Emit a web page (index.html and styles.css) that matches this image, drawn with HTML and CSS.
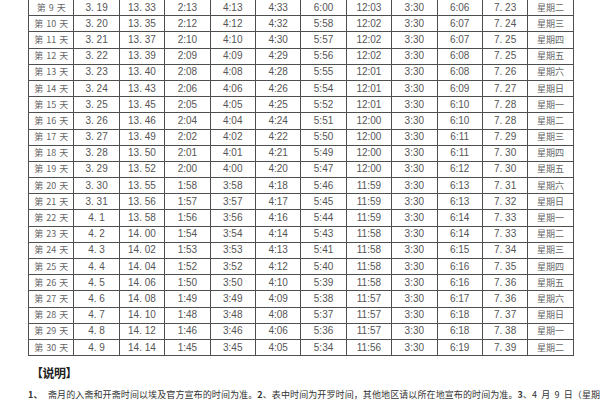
FILE: index.html
```html
<!DOCTYPE html>
<html lang="zh">
<head>
<meta charset="utf-8">
<link rel="stylesheet" href="styles.css">
</head>
<body>
<div class="page">
<table class="tbl">
<colgroup>
<col class="c"><col class="c"><col class="c"><col class="c"><col class="c"><col class="c"><col class="c"><col class="c"><col class="c"><col class="c"><col class="c"><col class="c">
</colgroup>
<tbody>
<tr><td class="d">第 9 天</td><td>3. 19</td><td>13. 33</td><td>2:13</td><td>4:13</td><td>4:33</td><td>6:00</td><td>12:03</td><td>3:30</td><td>6:06</td><td>7. 23</td><td class="w">星期二</td></tr>
<tr><td class="d">第 10 天</td><td>3. 20</td><td>13. 35</td><td>2:12</td><td>4:12</td><td>4:32</td><td>5:58</td><td>12:02</td><td>3:30</td><td>6:07</td><td>7. 24</td><td class="w">星期三</td></tr>
<tr><td class="d">第 11 天</td><td>3. 21</td><td>13. 37</td><td>2:10</td><td>4:10</td><td>4:30</td><td>5:57</td><td>12:02</td><td>3:30</td><td>6:07</td><td>7. 25</td><td class="w">星期四</td></tr>
<tr><td class="d">第 12 天</td><td>3. 22</td><td>13. 39</td><td>2:09</td><td>4:09</td><td>4:29</td><td>5:56</td><td>12:02</td><td>3:30</td><td>6:08</td><td>7. 25</td><td class="w">星期五</td></tr>
<tr><td class="d">第 13 天</td><td>3. 23</td><td>13. 40</td><td>2:08</td><td>4:08</td><td>4:28</td><td>5:55</td><td>12:01</td><td>3:30</td><td>6:08</td><td>7. 26</td><td class="w">星期六</td></tr>
<tr><td class="d">第 14 天</td><td>3. 24</td><td>13. 43</td><td>2:06</td><td>4:06</td><td>4:26</td><td>5:54</td><td>12:01</td><td>3:30</td><td>6:09</td><td>7. 27</td><td class="w">星期日</td></tr>
<tr><td class="d">第 15 天</td><td>3. 25</td><td>13. 45</td><td>2:05</td><td>4:05</td><td>4:25</td><td>5:52</td><td>12:01</td><td>3:30</td><td>6:10</td><td>7. 28</td><td class="w">星期一</td></tr>
<tr><td class="d">第 16 天</td><td>3. 26</td><td>13. 46</td><td>2:04</td><td>4:04</td><td>4:24</td><td>5:51</td><td>12:00</td><td>3:30</td><td>6:10</td><td>7. 28</td><td class="w">星期二</td></tr>
<tr><td class="d">第 17 天</td><td>3. 27</td><td>13. 49</td><td>2:02</td><td>4:02</td><td>4:22</td><td>5:50</td><td>12:00</td><td>3:30</td><td>6:11</td><td>7. 29</td><td class="w">星期三</td></tr>
<tr><td class="d">第 18 天</td><td>3. 28</td><td>13. 50</td><td>2:01</td><td>4:01</td><td>4:21</td><td>5:49</td><td>12:00</td><td>3:30</td><td>6:11</td><td>7. 30</td><td class="w">星期四</td></tr>
<tr><td class="d">第 19 天</td><td>3. 29</td><td>13. 52</td><td>2:00</td><td>4:00</td><td>4:20</td><td>5:47</td><td>12:00</td><td>3:30</td><td>6:12</td><td>7. 30</td><td class="w">星期五</td></tr>
<tr><td class="d">第 20 天</td><td>3. 30</td><td>13. 55</td><td>1:58</td><td>3:58</td><td>4:18</td><td>5:46</td><td>11:59</td><td>3:30</td><td>6:13</td><td>7. 31</td><td class="w">星期六</td></tr>
<tr><td class="d">第 21 天</td><td>3. 31</td><td>13. 56</td><td>1:57</td><td>3:57</td><td>4:17</td><td>5:45</td><td>11:59</td><td>3:30</td><td>6:13</td><td>7. 32</td><td class="w">星期日</td></tr>
<tr><td class="d">第 22 天</td><td>4. 1</td><td>13. 58</td><td>1:56</td><td>3:56</td><td>4:16</td><td>5:44</td><td>11:59</td><td>3:30</td><td>6:14</td><td>7. 33</td><td class="w">星期一</td></tr>
<tr><td class="d">第 23 天</td><td>4. 2</td><td>14. 00</td><td>1:54</td><td>3:54</td><td>4:14</td><td>5:43</td><td>11:58</td><td>3:30</td><td>6:14</td><td>7. 33</td><td class="w">星期二</td></tr>
<tr><td class="d">第 24 天</td><td>4. 3</td><td>14. 02</td><td>1:53</td><td>3:53</td><td>4:13</td><td>5:41</td><td>11:58</td><td>3:30</td><td>6:15</td><td>7. 34</td><td class="w">星期三</td></tr>
<tr><td class="d">第 25 天</td><td>4. 4</td><td>14. 04</td><td>1:52</td><td>3:52</td><td>4:12</td><td>5:40</td><td>11:58</td><td>3:30</td><td>6:16</td><td>7. 35</td><td class="w">星期四</td></tr>
<tr><td class="d">第 26 天</td><td>4. 5</td><td>14. 06</td><td>1:50</td><td>3:50</td><td>4:10</td><td>5:39</td><td>11:58</td><td>3:30</td><td>6:16</td><td>7. 36</td><td class="w">星期五</td></tr>
<tr><td class="d">第 27 天</td><td>4. 6</td><td>14. 08</td><td>1:49</td><td>3:49</td><td>4:09</td><td>5:38</td><td>11:57</td><td>3:30</td><td>6:17</td><td>7. 36</td><td class="w">星期六</td></tr>
<tr><td class="d">第 28 天</td><td>4. 7</td><td>14. 10</td><td>1:48</td><td>3:48</td><td>4:08</td><td>5:37</td><td>11:57</td><td>3:30</td><td>6:18</td><td>7. 37</td><td class="w">星期日</td></tr>
<tr><td class="d">第 29 天</td><td>4. 8</td><td>14. 12</td><td>1:46</td><td>3:46</td><td>4:06</td><td>5:36</td><td>11:57</td><td>3:30</td><td>6:18</td><td>7. 38</td><td class="w">星期一</td></tr>
<tr><td class="d">第 30 天</td><td>4. 9</td><td>14. 14</td><td>1:45</td><td>3:45</td><td>4:05</td><td>5:34</td><td>11:56</td><td>3:30</td><td>6:19</td><td>7. 39</td><td class="w">星期二</td></tr>
</tbody>
</table>
<h2 class="note-title">【说明】</h2>
<p class="note"><span class="num">1、</span>斋月的入斋和开斋时间以埃及官方宣布的时间为准。<b>2</b>、表中时间为开罗时间，其他地区请以所在地宣布的时间为准。<b>3</b>、4 月 9 日（星期二）</p>
</div>
</body>
</html>
```

FILE: styles.css
```css
html, body {
  margin: 0;
  padding: 0;
  background: #ffffff;
}

.page {
  width: 600px;
  height: 400px;
  overflow: hidden;
  padding-left: 28px;
  box-sizing: border-box;
  font-family: "Liberation Sans", "Noto Sans CJK SC", sans-serif;
  color: #555555;
}

.tbl {
  margin-top: -1px;
  border-collapse: collapse;
  table-layout: fixed;
  width: 545px;
}

.c {
  width: 45.4px;
}

.tbl td {
  height: 15.2px;
  padding: 0;
  border: 1px solid #4f4f4f;
  text-align: center;
  vertical-align: middle;
  font-size: 10px;
  line-height: 12px;
  white-space: nowrap;
  overflow: hidden;
}

.tbl td.d,
.tbl td.w {
  font-family: "Noto Sans CJK SC", sans-serif;
  font-size: 9px;
  color: #666666;
  word-spacing: 1px;
}

.note-title {
  margin: 9px 0 0 3px;
  font-family: "Noto Sans CJK SC", sans-serif;
  font-size: 12px;
  line-height: 16px;
  font-weight: 700;
  color: #222222;
  letter-spacing: -0.5px;
}

.note {
  margin: 8px 0 0 0;
  font-family: "Noto Sans CJK SC", sans-serif;
  font-size: 9px;
  line-height: 12px;
  letter-spacing: 0.1px;
  word-spacing: 2px;
  color: #333333;
  white-space: nowrap;
}

.note .num {
  display: inline-block;
  width: 20px;
  font-weight: 700;
}

.note b {
  font-weight: 700;
}
```
